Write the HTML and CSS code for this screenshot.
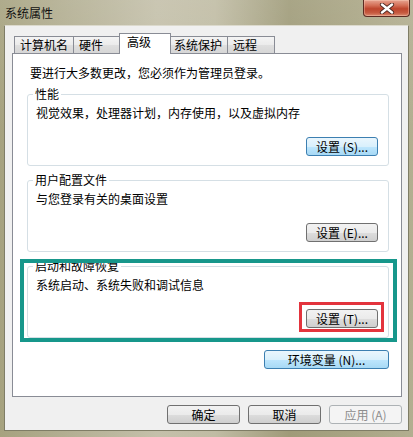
FILE: index.html
```html
<!DOCTYPE html>
<html lang="zh-CN">
<head>
<meta charset="utf-8">
<title>系统属性</title>
<link rel="stylesheet" href="styles.css">
</head>
<body>
<div class="window">
  <div class="titlebar">
    <span class="title">系统属性</span>
    <div class="close">
      <svg width="16" height="11" viewBox="0 0 16 11">
        <path d="M3 1.5 L13 9.5 M13 1.5 L3 9.5" stroke="#4a2620" stroke-width="4.2" stroke-linecap="round" fill="none"/>
        <path d="M3 1.5 L13 9.5 M13 1.5 L3 9.5" stroke="#ffffff" stroke-width="2.4" stroke-linecap="round" fill="none"/>
      </svg>
    </div>
  </div>
  <div class="client">
    <div class="tabs">
      <div class="tab">计算机名</div>
      <div class="tab">硬件</div>
      <div class="tab active">高级</div>
      <div class="tab">系统保护</div>
      <div class="tab">远程</div>
    </div>
    <div class="panel">
      <p class="intro">要进行大多数更改，您必须作为管理员登录。</p>
      <fieldset class="group">
        <legend>性能</legend>
        <p class="desc">视觉效果，处理器计划，内存使用，以及虚拟内存</p>
        <div class="group-actions"><button class="btn btn-default">设置 (S)...</button></div>
      </fieldset>
      <fieldset class="group">
        <legend>用户配置文件</legend>
        <p class="desc">与您登录有关的桌面设置</p>
        <div class="group-actions"><button class="btn">设置 (E)...</button></div>
      </fieldset>
      <div class="highlight-wrap">
        <fieldset class="group group-flush">
          <legend>启动和故障恢复</legend>
          <p class="desc">系统启动、系统失败和调试信息</p>
          <div class="group-actions">
            <span class="mark"><button class="btn">设置 (T)...</button><span class="frame-red"></span></span>
          </div>
        </fieldset>
        <span class="frame-teal"></span>
      </div>
      <div class="env-row"><button class="btn btn-default btn-env">环境变量 (N)...</button></div>
    </div>
    <div class="dialog-buttons">
      <button class="btn">确定</button>
      <button class="btn">取消</button>
      <button class="btn btn-disabled">应用 (A)</button>
    </div>
  </div>
</div>
</body>
</html>
```

FILE: styles.css
```css
* { box-sizing: border-box; }

html, body {
  margin: 0;
  padding: 0;
  width: 413px;
  height: 437px;
  overflow: hidden;
  font-family: "Noto Sans CJK SC", "Noto Sans", sans-serif;
  font-size: 12px;
  color: #000;
}

.window {
  width: 413px;
  height: 437px;
  background:
    linear-gradient(180deg, rgba(255,255,255,0.10) 0%, rgba(255,255,255,0) 30%),
    linear-gradient(90deg, #a6a27f 0%, #b4b094 18%, #c4c0aa 38%, #c0bca4 52%, #9f9b79 70%, #a9a584 86%, #b2ae90 100%);
  display: flex;
  flex-direction: column;
}

.titlebar {
  height: 25px;
  display: flex;
  align-items: flex-start;
}

.title {
  margin: 6px 0 0 5px;
  line-height: 14px;
  font-size: 12px;
  color: #111;
}

.close {
  margin-left: auto;
  margin-right: 3px;
  width: 47px;
  height: 17px;
  border: 1px solid #5b2b22;
  border-top: none;
  border-radius: 0 0 4px 4px;
  background: linear-gradient(180deg, #e7a491 0%, #d36d55 35%, #bd452d 55%, #c65a40 80%, #dc8a70 100%);
  display: flex;
  align-items: center;
  justify-content: center;
  box-shadow: inset 0 0 0 1px rgba(255,220,200,0.35);
}

.close svg { display: block; }

.client {
  margin: 0 4px;
  height: 406px;
  border: 1px solid #7f7d66;
  border-top-color: #dcdacd;
  background: #f0f0f0;
  padding: 7px 6px 6px 7px;
  display: flex;
  flex-direction: column;
}

.tabs {
  display: flex;
  align-items: flex-end;
  height: 21px;
  margin: 0 0 -1px 2px;
}

.tab {
  height: 17px;
  margin-bottom: 1px;
  min-width: 48px;
  padding: 0 5px;
  line-height: 15px;
  border: 1px solid #898c95;
  border-bottom: none;
  background: linear-gradient(180deg, #f4f4f4 0%, #ebebeb 50%, #dfdfdf 51%, #d6d6d6 100%);
  white-space: nowrap;
}

.tab + .tab { margin-left: -1px; }

.tab.active {
  position: relative;
  z-index: 1;
  height: 21px;
  margin: 0 -2px 0 -2px;
  padding: 0 7px;
  min-width: 52px;
  background: #fff;
}

.panel {
  flex: 1;
  background: #fff;
  border: 1px solid #898c95;
  padding: 12px 12px 0 14px;
}

.intro {
  margin: 0;
  padding-left: 3px;
  line-height: 14px;
}

.group {
  margin: 7px 0 0 0;
  padding: 0 10px 9px 8px;
  border: 1px solid #d5dfe5;
  border-radius: 3px;
  min-inline-size: 0;
}

.group legend {
  padding: 0 2px;
  margin-left: -3px;
  line-height: 14px;
  font-size: 12px;
}

.desc {
  margin: 5px 0 0 0;
  line-height: 14px;
}

.group-actions {
  margin-top: 17px;
  display: flex;
  justify-content: flex-end;
}

.btn {
  font-family: "Noto Sans CJK SC", "Noto Sans", sans-serif;
  font-size: 12px;
  color: #000;
  width: 72px;
  height: 19px;
  padding: 0;
  line-height: 17px;
  border: 1px solid #707070;
  border-radius: 3px;
  background: linear-gradient(180deg, #f2f2f2 0%, #ebebeb 50%, #dddddd 51%, #cfcfcf 100%);
  text-align: center;
  white-space: nowrap;
}

.btn-default {
  border-color: #3c7fb1;
  background: linear-gradient(180deg, #eaf6fd 0%, #d9f0fc 50%, #bee6fd 51%, #a7d9f5 100%);
}

.btn-disabled {
  color: #8d8d8d;
  border-color: #adb2b5;
  background: #f4f4f4;
}

.btn-env { width: 125px; }

.highlight-wrap {
  position: relative;
  margin-top: 7px;
}

.group-flush { margin-top: 0; }

.frame-teal {
  position: absolute;
  left: -7px;
  top: 0;
  right: -8px;
  bottom: -4px;
  border: 4px solid #17978b;
  pointer-events: none;
}

.mark {
  position: relative;
  display: inline-block;
}

.mark .btn { display: block; }

.frame-red {
  position: absolute;
  left: -7px;
  top: -7px;
  right: -6px;
  bottom: -4px;
  border: 3px solid #e3343d;
  pointer-events: none;
}

.env-row {
  margin-top: 12px;
  display: flex;
  justify-content: flex-end;
}

.dialog-buttons {
  margin-top: 8px;
  height: 19px;
  display: flex;
  justify-content: flex-end;
  gap: 8px;
}

.dialog-buttons .btn { width: 73px; }
```
